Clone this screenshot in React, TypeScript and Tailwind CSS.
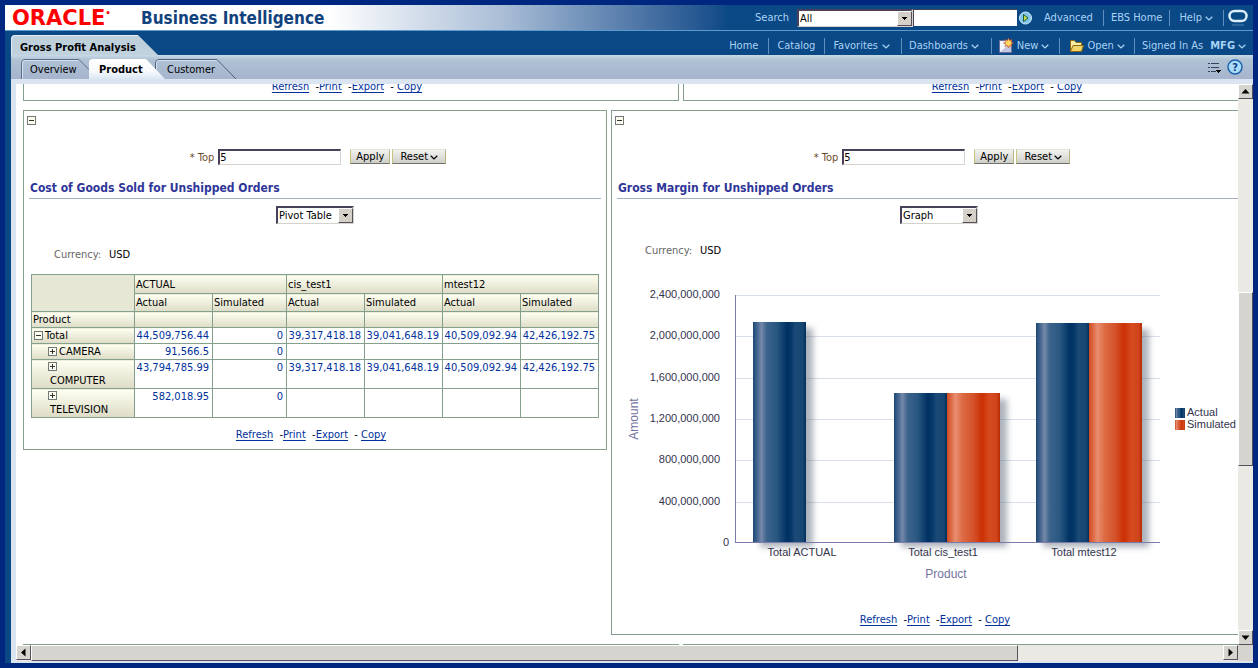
import type { ReactNode } from 'react'

const AXIS = ['2,400,000,000', '2,000,000,000', '1,600,000,000', '1,200,000,000', '800,000,000', '400,000,000', '0']

const BARS = [
  { label: 'Total ACTUAL', x: 141, top: 40, simulated: false },
  { label: 'Total cis_test1', x: 282, top: 111, simulated: true },
  { label: 'Total mtest12', x: 424, top: 41, simulated: true },
]

const ROWS = [
  { name: 'Total', kind: 'total', values: ['44,509,756.44', '0', '39,317,418.18', '39,041,648.19', '40,509,092.94', '42,426,192.75'] },
  { name: 'CAMERA', kind: 'inline', values: ['91,566.5', '0', '', '', '', ''] },
  { name: 'COMPUTER', kind: 'wrapped', values: ['43,794,785.99', '0', '39,317,418.18', '39,041,648.19', '40,509,092.94', '42,426,192.75'] },
  { name: 'TELEVISION', kind: 'wrapped', values: ['582,018.95', '0', '', '', '', ''] },
]

function Chevron() {
  return (
    <svg width="8" height="5" viewBox="0 0 8 5" className="mt-[2px] shrink-0" fill="none" stroke="currentColor" strokeWidth="1.3">
      <path d="M0.7 0.7 4 3.9 7.3 0.7" />
    </svg>
  )
}

function Toggle({ open, label }: { open?: boolean; label: string }) {
  return (
    <button aria-label={label} className="block h-[9px] w-[9px] shrink-0 bg-[#fbfbee]">
      <svg width="9" height="9" viewBox="0 0 9 9" fill="none" shapeRendering="crispEdges">
        <rect x="0.5" y="0.5" width="8" height="8" stroke="#6f7a78" />
        <path d="M2 4.5h5" stroke="#333" />
        {!open && <path d="M4.5 2v5" stroke="#333" />}
      </svg>
    </button>
  )
}

function Separator() {
  return <span className="h-4 w-px shrink-0 bg-[#5f8fba]" />
}

function Dropdown({ id, label, value, className }: { id: string; label: string; value: string; className: string }) {
  return (
    <div className={`relative h-[18px] shrink-0 ${className}`}>
      <select
        id={id}
        aria-label={label}
        defaultValue={value}
        className="block h-full w-full appearance-none rounded-none border-2 border-t-[#47425a] border-r-[#d6d3cc] border-b border-b-[#d6d3cc] border-l-[#47425a] bg-white pt-px pl-px text-[11px] leading-[14px] text-black"
      >
        <option>{value}</option>
      </select>
      <span className="pointer-events-none absolute top-[2px] right-[1px] flex h-[15px] w-[15px] items-center justify-center border border-t-white border-r-[#55505a] border-b-[#55505a] border-l-white bg-[#d4d0c8]">
        <svg width="5" height="3" viewBox="0 0 5 3" shapeRendering="crispEdges">
          <path d="M0 0h5L2.5 3z" />
        </svg>
      </span>
    </div>
  )
}

function ReportLinks() {
  const link = 'text-[#00309c] underline underline-offset-2'
  return (
    <div className="flex justify-center pr-2 text-[11px] leading-[14px] whitespace-pre">
      <a href="#refresh" className={link}>Refresh</a>
      <span>{'  -'}</span>
      <a href="#print" className={link}>Print</a>
      <span>{'  -'}</span>
      <a href="#export" className={link}>Export</a>
      <span>{'  - '}</span>
      <a href="#copy" className={link}>Copy</a>
    </div>
  )
}

function Prompt({ id }: { id: string }) {
  const button =
    'flex h-[15px] items-center border border-t-[#e4e4dc] border-r-[#b9b47e] border-b-[#77706a] border-l-[#c9c27e] bg-linear-to-b from-[#f2f2f0] to-[#cfcfca]'
  return (
    <div className="flex items-center justify-center pl-[6px]">
      <label htmlFor={id} className="mr-1 pt-[3px] text-[#6b4a2c]">
        * Top
      </label>
      <input
        id={id}
        defaultValue="5"
        className="h-4 w-[123px] border border-t-2 border-l-2 border-t-[#47425a] border-r-[#d6d3cc] border-b-[#d6d3cc] border-l-[#47425a] bg-white text-[11px] outline-none"
      />
      <button className={`${button} ml-[9px] w-10 justify-center`}>Apply</button>
      <button className={`${button} ml-[2px] w-[54px] justify-center gap-[2px]`}>
        Reset <Chevron />
      </button>
    </div>
  )
}

interface PanelProps {
  id: string
  title: string
  view: string
  className: string
  children: ReactNode
}

function Panel({ id, title, view, className, children }: PanelProps) {
  return (
    <section className={`shrink-0 border border-[#84a08c] ${className}`}>
      <div className="px-[3px] pt-[5px]">
        <Toggle open label={`Collapse ${title}`} />
      </div>
      <div className="mt-[23px]">
        <Prompt id={`${id}-top`} />
      </div>
      <h2 className="mx-[5px] mt-4 border-b border-[#a4aebc] pb-[2px] pl-px text-[12px] leading-[15px] font-bold text-[#2f3699]">
        {title}
      </h2>
      <div className="mt-[7px] flex justify-center">
        <Dropdown id={`${id}-view`} label={`${title} view`} value={view} className="w-[78px]" />
      </div>
      {children}
    </section>
  )
}

function Currency({ className }: { className: string }) {
  return (
    <p className={`leading-[14px] ${className}`}>
      <span className="mr-2 text-[#666]">Currency:</span>USD
    </p>
  )
}

function PivotTable() {
  const head = 'border border-[#84a08c] bg-linear-to-b from-[#fffff2] to-[#dcdcc6] px-px text-left font-normal'
  return (
    <table className="ml-[7px] w-[568px] table-fixed border-collapse leading-[13px]">
      <colgroup>
        <col className="w-[103px]" />
        <col className="w-[78px]" />
        <col className="w-[74px]" />
        <col className="w-[78px]" />
        <col className="w-[78px]" />
        <col className="w-[78px]" />
        <col className="w-[78px]" />
      </colgroup>
      <thead>
        <tr className="h-[19px]">
          <td rowSpan={2} className="border border-[#84a08c] bg-[#e7e7d5]" />
          <th scope="colgroup" colSpan={2} className={head}>ACTUAL</th>
          <th scope="colgroup" colSpan={2} className={head}>cis_test1</th>
          <th scope="colgroup" colSpan={2} className={head}>mtest12</th>
        </tr>
        <tr className="h-[18px]">
          {['ACTUAL', 'cis_test1', 'mtest12'].flatMap(group =>
            ['Actual', 'Simulated'].map(measure => (
              <th key={group + measure} scope="col" className={head}>{measure}</th>
            ))
          )}
        </tr>
        <tr className="h-4">
          <th scope="col" className={head}>Product</th>
          {ROWS[0].values.map((_, i) => (
            <td key={i} className={head} />
          ))}
        </tr>
      </thead>
      <tbody>
        {ROWS.map(row => (
          <tr key={row.name} className={row.kind === 'wrapped' ? 'h-[29px]' : 'h-4'}>
            <th scope="row" className={head}>
              {row.kind === 'wrapped' ? (
                <div className="pl-[15px]">
                  <Toggle label={`Expand ${row.name}`} />
                  <div className="mt-[3px] pl-[2px]">{row.name}</div>
                </div>
              ) : (
                <div className={row.kind === 'total' ? 'flex items-center gap-[2px] pl-px' : 'flex items-center gap-[2px] pl-[15px]'}>
                  <Toggle open={row.kind === 'total'} label={`Toggle ${row.name}`} />
                  {row.name}
                </div>
              )}
            </th>
            {row.values.map((value, i) => (
              <td key={i} className="border border-[#84a08c] pt-px pr-[3px] text-right align-top text-[#00309c]">
                {value}
              </td>
            ))}
          </tr>
        ))}
      </tbody>
    </table>
  )
}

function MarginChart() {
  return (
    <svg width="630" height="308" viewBox="0 0 630 308" className="block font-['Liberation_Sans',Arial,sans-serif]" role="img" aria-label="Gross margin by product">
      <defs>
        <linearGradient id="actual">
          <stop offset="0" stopColor="#1c4876" />
          <stop offset="0.08" stopColor="#44658f" />
          <stop offset="0.16" stopColor="#7588aa" />
          <stop offset="0.26" stopColor="#3c638b" />
          <stop offset="0.45" stopColor="#285781" />
          <stop offset="0.64" stopColor="#003163" />
          <stop offset="0.72" stopColor="#063869" />
          <stop offset="0.8" stopColor="#1b4a77" />
          <stop offset="0.94" stopColor="#174673" />
          <stop offset="1" stopColor="#032e5c" />
        </linearGradient>
        <linearGradient id="simulated">
          <stop offset="0" stopColor="#d14a1e" />
          <stop offset="0.16" stopColor="#e88d70" />
          <stop offset="0.3" stopColor="#dc6a42" />
          <stop offset="0.5" stopColor="#d4522a" />
          <stop offset="0.66" stopColor="#cc3003" />
          <stop offset="0.8" stopColor="#d54a1f" />
          <stop offset="0.94" stopColor="#cf441a" />
          <stop offset="1" stopColor="#b42b02" />
        </linearGradient>
        <filter id="shadow" x="-20%" y="-10%" width="150%" height="120%">
          <feGaussianBlur stdDeviation="3" />
        </filter>
      </defs>

      {AXIS.map((label, i) => {
        const y = 13 + Math.round(i * 41.3)
        return (
          <g key={label}>
            {i < 6 && <rect x="124" y={y} width="424" height="1" fill="#d8dfe8" />}
            <text x={i < 6 ? 108 : 117} y={y + 3} textAnchor="end" fontSize="11" fill="#33334d">{label}</text>
          </g>
        )
      })}
      <text x="26" y="137" textAnchor="middle" fontSize="12" fill="#73739c" transform="rotate(-90 26 137)">Amount</text>

      {BARS.map(bar => (
        <g key={bar.label}>
          <rect x={bar.x + 7} y={bar.top + 6} width={bar.simulated ? 106 : 53} height={259 - bar.top} fill="#5c6878" opacity="0.5" filter="url(#shadow)" />
          <rect x={bar.x} y={bar.top} width="53" height={260 - bar.top} fill="url(#actual)" />
          {bar.simulated && <rect x={bar.x + 53} y={bar.top} width="53" height={260 - bar.top} fill="url(#simulated)" />}
        </g>
      ))}
      {BARS.map((bar, i) => (
        <text key={bar.label} x={190 + i * 141} y="274" textAnchor="middle" fontSize="11" fill="#33334d">{bar.label}</text>
      ))}
      <path d="M123.5 13V260.5H548" fill="none" stroke="#7b7bab" shapeRendering="crispEdges" />
      <text x="334" y="296" textAnchor="middle" fontSize="12" fill="#73739c">Product</text>

      <rect x="563" y="126" width="10" height="10" fill="url(#actual)" />
      <text x="575" y="134" fontSize="11" fill="#33334d">Actual</text>
      <rect x="563" y="138" width="10" height="10" fill="url(#simulated)" />
      <text x="575" y="146" fontSize="11" fill="#33334d">Simulated</text>
    </svg>
  )
}

function NewIcon() {
  return (
    <svg width="16" height="16" viewBox="0 0 16 16">
      <path d="M1.500 2.500h12v12h-12z" fill="#f4f4fb" stroke="#6d6f9c" />
      <path d="M2 14 13 5v9z" fill="#c3c8e2" />
      <path d="m10.500 0 1 2.500 2.500-1-1 2.500 2.500 1-2.500 1 1 2.500-2.500-1-1 2.500-1-2.500-2.500 1 1-2.500-2.500-1 2.500-1-1-2.500 2.500 1z" fill="#ffd75e" stroke="#b8401c" strokeWidth="0.6" />
    </svg>
  )
}

function OpenIcon() {
  return (
    <svg width="15" height="14" viewBox="0 0 15 14" stroke="#8b6a13">
      <path d="M1.500 12.500v-11h4l1.500 2h5.500v3" fill="#fbeea6" />
      <path d="M1.500 12.500 4 6.500h10.500l-2 6z" fill="#f0d468" />
    </svg>
  )
}

function Header() {
  return (
    <header className="bg-[#0a4886] text-[#a9d3f5]">
      <div className="flex h-[26px] items-center border-b border-[#5b9bd0] bg-linear-to-r from-white from-26% via-[#a9bdd6] via-40% to-[#0a4886] to-58%">
        <a href="#oracle" className="ml-[7px] flex w-[105px] font-['DejaVu_Sans','Liberation_Sans',sans-serif] text-[21px] leading-5 font-bold text-[#f00]">
          ORACLE<span className="text-[8px] leading-3">•</span>
        </a>
        <h1 className="ml-6 text-[17px] leading-5 font-bold text-[#12427d]">Business Intelligence</h1>
        <div className="ml-auto flex items-center">
          <label htmlFor="scope" className="mr-2">Search</label>
          <Dropdown id="scope" label="Search scope" value="All" className="w-[116px]" />
          <input aria-label="Search text" className="h-[17px] w-[104px] border-t border-l border-[#47425a] bg-white text-black outline-none" />
          <button aria-label="Go" className="mx-[2px]">
            <svg width="13" height="14" viewBox="0 0 13 14">
              <circle cx="6.5" cy="7" r="6" fill="#7fc4ea" stroke="#d3edfb" />
              <path d="M4.500 3.500v7l4.500-3.500z" fill="#c6e04c" stroke="#1d5b32" />
            </svg>
          </button>
          <a href="#advanced" className="mr-[10px] ml-[10px]">Advanced</a>
          <Separator />
          <a href="#ebs" className="mx-[7px]">EBS Home</a>
          <Separator />
          <button className="mr-[10px] ml-[9px] flex items-center gap-[3px]">Help <Chevron /></button>
          <Separator />
          <svg width="20" height="18" viewBox="0 0 20 18" className="mr-[5px] ml-1">
            <rect x="1.500" y="2" width="17" height="10" rx="5" fill="none" stroke="#d9edfa" strokeWidth="2.500" />
            <path d="M4 16h12" stroke="#6f9dc6" opacity="0.7" />
          </svg>
        </div>
      </div>
      <div className="flex h-6 items-end">
        <button className="relative ml-[6px] h-5 w-[147px] pt-[5px] pl-[9px] text-left font-bold text-black">
          <svg viewBox="0 0 147 20" className="absolute inset-0 h-full w-full">
            <defs>
              <linearGradient id="page-tab" x2="0" y2="1">
                <stop offset="0" stopColor="#bccfdb" />
                <stop offset="1" stopColor="#bfd2de" />
              </linearGradient>
            </defs>
            <path d="M0 20V4Q0 0 4 0H127L147 20z" fill="url(#page-tab)" />
            <path d="M0.500 20V4Q0.500 0.500 4 0.500H127" fill="none" stroke="#e0ebf1" />
          </svg>
          <span className="relative text-[11px] whitespace-nowrap">Gross Profit Analysis</span>
        </button>
        <nav className="ml-auto flex h-6 items-center pt-[5px]">
          <a href="#home" className="mr-[10px]">Home</a>
          <Separator />
          <a href="#catalog" className="mr-[9px] ml-2">Catalog</a>
          <Separator />
          <button className="mr-[11px] ml-2 flex items-center gap-1">Favorites <Chevron /></button>
          <Separator />
          <button className="mr-3 ml-[7px] flex items-center gap-[3px]">Dashboards <Chevron /></button>
          <Separator />
          <button className="mr-[10px] ml-[6px] flex items-center gap-[3px]"><NewIcon />New <Chevron /></button>
          <Separator />
          <button className="mr-[9px] ml-[9px] flex items-center gap-[3px]"><OpenIcon />Open <Chevron /></button>
          <Separator />
          <span className="ml-[7px]">Signed In As</span>
          <button className="mr-[7px] ml-[7px] flex items-center gap-[3px] font-bold">MFG <Chevron /></button>
        </nav>
      </div>
    </header>
  )
}

function TabBar() {
  return (
    <div className="flex h-[24px] items-end bg-linear-to-b from-[#c9dae5] via-[#aec2d4] via-20% to-[#a6b4cd]">
      <button className="relative ml-[10px] h-5 w-[68px] pt-[2px] pl-[9px] text-left">
        <svg viewBox="0 0 68 20" className="absolute inset-0 h-full w-full" fill="none">
          <path d="M0.500 20V4Q0.500 0.500 4 0.500H58L68 10.500" stroke="#5b6b88" />
          <path d="M1.500 20V4Q1.500 1.500 4 1.500H57.500" stroke="#d5e1ed" />
        </svg>
        <span className="relative">Overview</span>
      </button>
      <button className="relative h-5 w-[66px] pt-[2px] pl-[10px] text-left font-bold">
        <svg viewBox="0 0 76 20" className="absolute top-0 left-0 h-5 w-[76px]">
          <defs>
            <linearGradient id="active-tab" x2="0" y2="1">
              <stop offset="0" stopColor="#fff" />
              <stop offset="0.6" stopColor="#f7fafd" />
              <stop offset="1" stopColor="#dbe6f2" />
            </linearGradient>
          </defs>
          <path d="M0 20V4Q0 0 4 0H57L76 20z" fill="url(#active-tab)" />
        </svg>
        <span className="relative">Product</span>
      </button>
      <button className="relative h-5 w-[82px] pt-[2px] pl-3 text-left">
        <svg viewBox="0 0 82 20" className="absolute inset-0 h-full w-full" fill="none">
          <path d="M0.500 10V4Q0.500 0.500 4 0.500H62L81 20" stroke="#4f5f7d" />
          <path d="M1.500 10V4Q1.500 1.500 4 1.500H61.500" stroke="#d5e1ed" />
        </svg>
        <span className="relative">Customer</span>
      </button>
      <div className="mr-[10px] ml-auto flex h-full items-center gap-[5px]">
        <button aria-label="Page options">
          <svg width="15" height="13" viewBox="0 0 15 13" shapeRendering="crispEdges">
            <path d="M1 2.500h2M4 2.500h8M1 6.500h2M4 6.500h8M1 10.500h2M4 10.500h5" stroke="#35405a" />
            <path d="M9 9h5l-2.500 3.500z" />
          </svg>
        </button>
        <button aria-label="Help">
          <svg width="16" height="16" viewBox="0 0 16 16">
            <circle cx="8" cy="8" r="7" fill="#a8dcf8" stroke="#1f62ad" strokeWidth="1.500" />
            <text x="8" y="12" textAnchor="middle" fontSize="11" fontWeight="bold" fill="#123f86">?</text>
          </svg>
        </button>
      </div>
    </div>
  )
}

const BEVEL = 'border border-t-white border-r-[#55505a] border-b-[#55505a] border-l-white bg-[#d5d4ce]'

function ScrollButton({ label, d }: { label: string; d: string }) {
  return (
    <button aria-label={label} className={`flex h-[15px] w-[15px] shrink-0 items-center justify-center ${BEVEL}`}>
      <svg width="9" height="9" viewBox="0 0 9 9">
        <path d={d} />
      </svg>
    </button>
  )
}

export default function App() {
  return (
    <div className="flex h-screen flex-col bg-[#00277f] p-[5px] font-['DejaVu_Sans_Condensed','Noto_Sans',sans-serif] text-[11px] leading-[14px] text-black">
      <Header />
      <div className="flex min-h-0 flex-1 bg-[#0a4886] pl-[6px]">
        <div className="flex min-w-0 flex-1 flex-col bg-[#dbe5f1]">
          <TabBar />
          <div className="mt-[5px] flex min-h-0 flex-1 pl-[5px]">
            <main className="min-w-0 flex-1 overflow-hidden bg-white pl-[7px]">
              <div className="flex h-[17px] gap-1">
                {['left', 'right'].map(side => (
                  <div key={side} className="flex w-[656px] shrink-0 flex-col justify-end overflow-hidden border-x border-b border-[#84a08c] pb-[6px]">
                    <ReportLinks />
                  </div>
                ))}
              </div>

              <div className="mt-[9px] flex items-start gap-1">
                <Panel id="cogs" title="Cost of Goods Sold for Unshipped Orders" view="Pivot Table" className="w-[584px] pb-[7px]">
                  <Currency className="mt-6 ml-[30px]" />
                  <div className="mt-3 mb-[10px]">
                    <PivotTable />
                  </div>
                  <ReportLinks />
                </Panel>
                <Panel id="margin" title="Gross Margin for Unshipped Orders" view="Graph" className="w-[656px] pb-[7px]">
                  <Currency className="mt-5 ml-[33px]" />
                  <div className="mt-6 mb-[23px]">
                    <MarginChart />
                  </div>
                  <ReportLinks />
                </Panel>
              </div>

              <div className="mt-[9px] flex gap-1">
                <div className="h-5 w-[656px] shrink-0 border border-[#84a08c]" />
                <div className="h-5 w-[656px] shrink-0 border border-[#84a08c]" />
              </div>
            </main>
            <div className="flex w-[15px] shrink-0 flex-col bg-[#ebe9e4]">
              <ScrollButton label="Scroll up" d="M4.500 2 8.500 6.500H0.500z" />
              <div className="flex-[193]" />
              <div className={`flex-[173] ${BEVEL}`} />
              <div className="flex-[164]" />
              <ScrollButton label="Scroll down" d="M4.500 7 8.500 2.500H0.500z" />
            </div>
          </div>
          <div className="mb-[2px] ml-[5px] flex h-4 shrink-0 bg-[#ebe9e4]">
            <ScrollButton label="Scroll left" d="M2 4.500 6.500 0.500v8z" />
            <div className={`flex-[984] ${BEVEL}`} />
            <div className="flex-[205]" />
            <ScrollButton label="Scroll right" d="M7 4.500 2.500 0.500v8z" />
            <div className="w-[15px] bg-[#d5d4ce]" />
          </div>
        </div>
      </div>
    </div>
  )
}
